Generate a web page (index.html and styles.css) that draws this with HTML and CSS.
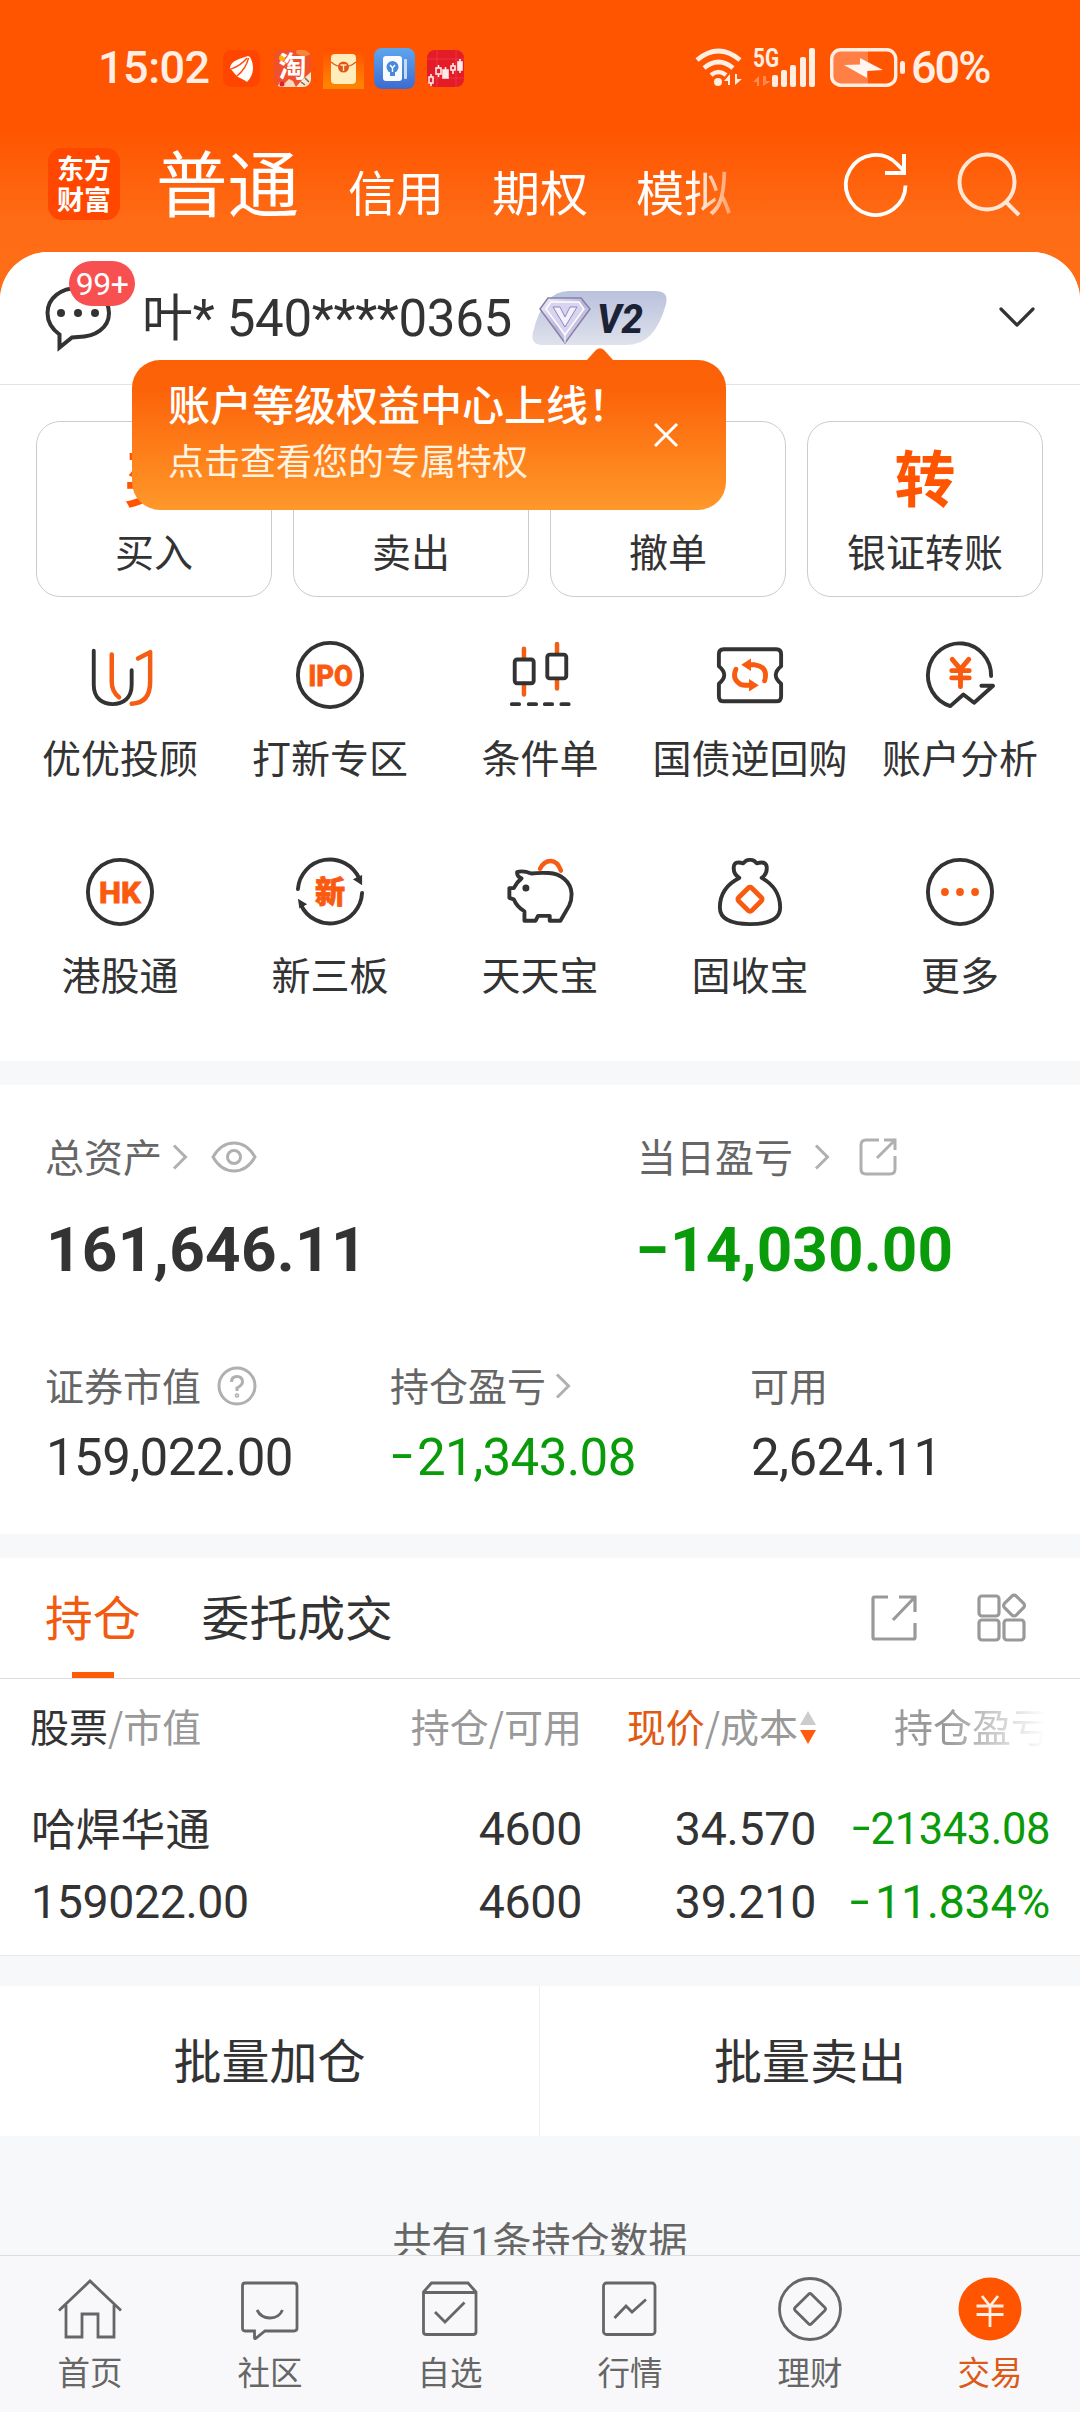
FILE: index.html
```html
<!DOCTYPE html>
<html lang="zh-CN">
<head>
<meta charset="utf-8">
<title>交易</title>
<link rel="stylesheet" href="styles.css">
</head>
<body>
<div class="app">
  <header class="top">
    <div class="status">
      <span class="clock">15:02</span>
      <div class="notices">
        <svg width="37" height="37" viewBox="0 0 37 37"><rect width="37" height="37" rx="8" fill="#ff4500"/><path d="M7 18C8 10 17 9 25 6L27 7C31 14 32 24 24 32L21 30L15 27L12 24Z" fill="#fff"/><path d="M8 19C14 17 20 13 24 8M14 26C20 21 24 15 25.500 8" fill="none" stroke="#ff4500" stroke-width="1.300"/></svg>
        <svg class="n2" width="37" height="37" viewBox="0 0 37 37"><defs><clipPath id="tb"><rect width="37" height="37" rx="8"/></clipPath></defs><g clip-path="url(#tb)"><rect width="37" height="37" fill="#f0502c"/><ellipse cx="30" cy="2" rx="8" ry="4" fill="#f6863c"/><circle cx="8" cy="8" r="3" fill="#ffb400"/><text x="18.500" y="27" font-size="28" font-weight="700" text-anchor="middle" fill="#fff" class="cjk">淘</text><path d="M3 37L6 32L11 33L15 29L19 31L22 37Z" fill="#f8d8c0"/><path d="M22 37L28 30L37 22V37Z" fill="#fbe6cf"/><path d="M27 32L31 35M31 28L35 32" stroke="#7a6a55" stroke-width="1.500"/><circle cx="8" cy="34" r="2.500" fill="#e0202c"/></g></svg>
        <svg class="n3" width="41" height="41" viewBox="0 0 41 41"><defs><linearGradient id="mail" x1="0" y1="0" x2="0" y2="1"><stop offset="0" stop-color="#ff5000"/><stop offset="1" stop-color="#ff8800"/></linearGradient></defs><rect width="41" height="41" fill="url(#mail)"/><rect x="8" y="6" width="25" height="30" rx="4" fill="#ffeebb"/><path d="M8 14Q14 19 20.500 19Q27 19 33 14" fill="none" stroke="#d95a20" stroke-width="1.200"/><circle cx="20.500" cy="19" r="5.500" fill="#e2551a"/><path d="M17.500 17H23.500M20.500 17V23" stroke="#ffe9b0" stroke-width="1.400"/></svg>
        <svg class="n4" width="41" height="41" viewBox="0 0 41 41"><defs><linearGradient id="blue" x1="0" y1="0" x2="0" y2="1"><stop offset="0" stop-color="#5da6ee"/><stop offset="1" stop-color="#3c6bd0"/></linearGradient></defs><rect width="41" height="41" rx="8" fill="url(#blue)"/><rect x="30" y="11" width="3" height="20" rx="1" fill="#c4dcfa"/><rect x="9" y="8" width="19" height="25" rx="3" fill="#f7fbff"/><circle cx="18.500" cy="19" r="6" fill="#4a88da"/><path d="M16 24H21V28H16Z" fill="#4a88da"/><path d="M16 17L18.500 20L21 17M18.500 20V24" stroke="#fff" stroke-width="1.400" fill="none"/></svg>
        <svg class="n5" width="37" height="37" viewBox="0 0 37 37"><rect width="37" height="37" rx="8" fill="#e41c28"/><path d="M0 9H37M0 28H37M10 0V37M29 0V37" stroke="#ee4550" stroke-width=".6"/><g fill="none" stroke="#ffeaea" stroke-width="1.600"><path d="M4 24V27M4 33V36M11.500 15V18M11.500 24V27M18.500 17V20M26 13V16M26 20V24M33 9V12M33 20V23"/><rect x="2" y="27" width="4" height="6"/><rect x="9" y="18" width="5" height="6"/><rect x="16" y="20" width="5" height="8" fill="#ffeaea"/><rect x="24" y="16" width="4" height="4"/><rect x="31" y="12" width="4" height="8" fill="#ffeaea"/></g></svg>
      </div>
      <div class="sys">
        <svg width="48" height="40" viewBox="0 0 48 40"><g fill="none" stroke="#ffeee3" stroke-width="4.600"><path d="M2 12Q23.500 -6 45 12"/><path d="M9 20Q23.500 8 38 20"/><path d="M16 27Q23.500 21 31 27"/></g><circle cx="23" cy="34" r="4" fill="#ffeee3"/><path d="M29 33L35 26V37H33V33ZM40 26V37L47 31H42V26Z" fill="#ffeee3"/></svg>
        <svg class="cell" width="64" height="40" viewBox="0 0 64 40"><text x="0" y="19" font-size="25" font-weight="700" textLength="26" lengthAdjust="spacingAndGlyphs" fill="#ffeee3" class="num">5G</text><path d="M0 34L6 28V38H4V34ZM10 28V38L18 33H13V28Z" fill="#ff8a52"/><g fill="#ffeee3"><rect x="19" y="27" width="6" height="12" rx="2"/><rect x="28" y="22" width="6" height="17" rx="2"/><rect x="37" y="17" width="6" height="22" rx="2"/><rect x="47" y="9" width="6" height="30" rx="2"/><rect x="56" y="0" width="6" height="39" rx="2"/></g></svg>
        <svg class="batt" width="76" height="40" viewBox="0 0 76 40"><path d="M10 2H38V37H10Q2 37 2 28V11Q2 2 10 2Z" fill="#ff7f45"/><rect x="1.700" y="1.700" width="64" height="35.500" rx="9" fill="none" stroke="#ffeee3" stroke-width="3.400"/><path d="M14 17L30 16.500V10L53 22L37 23V30Z" fill="#fff6ef"/><rect x="70" y="13" width="5" height="13" rx="2.500" fill="#ffeee3"/></svg>
        <span class="pct">60%</span>
      </div>
    </div>
    <div class="bar">
      <div class="logo"><span>东方</span><span>财富</span></div>
      <nav class="modes"><span class="on">普通</span><span>信用</span><span>期权</span><span>模拟</span></nav>
      <div class="tools">
        <svg width="64" height="66" viewBox="0 0 64 66"><path d="M61.500 33.500A29.800 30 0 1 1 53 12L59 18" fill="none" stroke="#fff" stroke-width="3.800"/><path d="M60 2V21H41" fill="none" stroke="#fff" stroke-width="4"/></svg>
        <svg width="66" height="66" viewBox="0 0 66 66"><g fill="none" stroke="#ffe6d6" stroke-width="4"><circle cx="30" cy="30" r="27.500"/><path d="M48 49L62 63"/></g></svg>
      </div>
    </div>
  </header>

  <main class="sheet">
    <section class="account">
      <div class="msg">
        <svg width="66" height="66" viewBox="0 0 66 66"><path d="M14.500 48.500C7 43 2.500 36 2.500 27C2.500 12 16 2 33 2S64 12 64 27S50 51 33 51L27 51.500L14.500 61.500Z" fill="none" stroke="#333" stroke-width="4"/><g fill="#333"><circle cx="16" cy="27" r="4"/><circle cx="33" cy="27" r="4"/><circle cx="50" cy="27" r="4"/></g></svg>
        <span class="count">99+</span>
      </div>
      <span class="acct">叶* 540****0365</span>
      <svg class="vip" width="138" height="58" viewBox="0 0 138 58"><defs><linearGradient id="vb" x1="0" y1="0" x2="0" y2="1"><stop offset="0" stop-color="#b9c1dc"/><stop offset="1" stop-color="#dfe2ec"/></linearGradient><linearGradient id="gem" x1="0" y1="0" x2="1" y2="1"><stop offset="0" stop-color="#f5f2ff"/><stop offset=".5" stop-color="#b9b3d8"/><stop offset="1" stop-color="#ebe8f8"/></linearGradient></defs><path d="M38 2H124Q138 2 135 15Q124 56 96 56H12Q-1 56 2 43Q12 2 38 2Z" fill="url(#vb)"/><path d="M17 9H50L59 20L34 54L9 20Z" fill="url(#gem)" stroke="#8580a8" stroke-width="1.500"/><path d="M20 13H48L53 20L34 46L15 20Z" fill="#d8d3ee" stroke="#fff" stroke-width="1.500"/><path d="M22 18L34 38L46 18H39L34 28L29 18Z" fill="#f4f1ff" stroke="#8f87ba"/><path d="M34 46V54" stroke="#fff"/><text x="66" y="44" font-size="41" font-weight="800" font-style="italic" textLength="46" lengthAdjust="spacingAndGlyphs" fill="#1c2236" class="num">V2</text></svg>
      <svg class="down" width="38" height="24" viewBox="0 0 38 24"><path d="M3 3L19 19L35 3" fill="none" stroke="#333" stroke-width="3.200" stroke-linecap="round" stroke-linejoin="round"/></svg>
      <aside class="tip">
        <svg class="tip-arrow" width="28" height="13" viewBox="0 0 28 13"><path d="M0 13L10 2Q14 -1.500 18 2L28 13Z" fill="#fc6108"/></svg>
        <div><div class="tip-title">账户等级权益中心上线！</div><div class="tip-sub">点击查看您的专属特权</div></div>
        <svg width="26" height="26" viewBox="0 0 26 26"><path d="M2 2L24 24M24 2L2 24" stroke="#fff" stroke-width="3"/></svg>
      </aside>
    </section>

    <section class="trade">
      <div class="card"><b>买</b><span>买入</span></div>
      <div class="card"><b>卖</b><span>卖出</span></div>
      <div class="card"><b>撤</b><span>撤单</span></div>
      <div class="card"><b>转</b><span>银证转账</span></div>
    </section>

    <section class="grid">
      <div class="tile"><svg viewBox="0 0 72 72"><path class="d" d="M9 11V46C9 60 18 66 28.500 66S48 60 48 46V31"/><path class="o" d="M27.500 15V43Q27.500 53 35 59M54.500 19L67 12.500V43Q67 65 48 65.500"/></svg><span>优优投顾</span></div>
      <div class="tile"><svg viewBox="0 0 72 72"><circle class="d" cx="36" cy="36" r="33"/><text x="13.500" y="47" font-size="31" textLength="46" lengthAdjust="spacingAndGlyphs" class="t num">IPO</text></svg><span>打新专区</span></div>
      <div class="tile"><svg viewBox="0 0 72 72"><path class="o" stroke-linecap="butt" d="M19.500 9V19M19.500 45V56M53.500 4V14M53.500 40V50"/><rect class="d" x="10" y="20" width="19.500" height="24.500" rx="2.500"/><rect class="d" x="43.500" y="15" width="19.500" height="24.500" rx="2.500"/><path class="d" d="M7 66H14.500M24.500 66H32M41 66H48.500M58 66H65.500"/></svg><span>条件单</span></div>
      <div class="tile"><svg viewBox="0 0 72 72"><path class="d" d="M9 9.500H63Q68 9.500 68 14.500V27Q57 36 68 45V58Q68 63 63 63H9Q4 63 4 58V45Q15 36 4 27V14.500Q4 9.500 9 9.500Z"/><path class="o5" d="M35 25.500H41Q52 27 52 36Q52 39 51 42M21.500 30Q18 38 23 43Q26 46.500 31 46.500H37"/><path class="f" d="M27 25.500L37 19V32ZM45 46.500L35 40V53Z"/></svg><span>国债逆回购</span></div>
      <div class="tile"><svg viewBox="0 0 72 72"><path class="d" stroke-linejoin="miter" d="M68 37A32.500 33 0 1 0 26 68L39.500 56L50.500 64.500L70 47H58"/><path class="o5" d="M28 20L36.500 30L45 20M36.500 30V48M27.500 31.500H45.500M27.500 39H45.500"/></svg><span>账户分析</span></div>
      <div class="tile"><svg viewBox="0 0 72 72"><circle class="d" cx="36" cy="36" r="33"/><text x="14.500" y="47" font-size="31" textLength="43" lengthAdjust="spacingAndGlyphs" class="t num">HK</text></svg><span>港股通</span></div>
      <div class="tile"><svg viewBox="0 0 72 72"><path class="d" d="M3 33A33 33 0 0 1 66 22M69 37A33 33 0 0 1 6 49"/><path d="M59.500 23L69 18.500V29ZM3 43L4.500 53L12.500 48.500Z" fill="#333"/><text x="36" y="47" font-size="31" text-anchor="middle" class="t cjk">新</text></svg><span>新三板</span></div>
      <div class="tile"><svg viewBox="0 0 72 72"><path class="o" d="M36 12Q40 4 47 4T57.500 14"/><path class="d" d="M27 17C22 15 17 14 12.500 15.500Q12 20 17 22Q12 26 9 32H4.500V42L9 43.500Q12 51 20 56V65.500H31.500L34 60.500H46V65.500H57L66 50Q68.500 45 68.500 38C68 25 57 17 45 16.500Q35 16 27 17Z"/><circle cx="21.500" cy="32" r="3.600" fill="#333"/></svg><span>天天宝</span></div>
      <div class="tile"><svg viewBox="0 0 72 72"><path class="d" d="M25 21.500Q18 17 19.500 9Q21 4 29 6.500Q32 2.500 36 3Q40 2.500 43 6.500Q51 4 53 9Q54.500 17 48 21.500C60 28 67 39 67 52C67 64 55 69 36 69S5 64 5 52C5 39 12 28 25 21.500Z"/><rect class="o5" x="26.500" y="34" width="19" height="19" rx="2.500" transform="rotate(45 36 43.500)"/></svg><span>固收宝</span></div>
      <div class="tile"><svg viewBox="0 0 72 72"><circle class="d" cx="36" cy="36" r="33"/><g class="f"><circle cx="20.500" cy="36" r="4"/><circle cx="36" cy="36" r="4"/><circle cx="51.500" cy="36" r="4"/></g></svg><span>更多</span></div>
    </section>

    <section class="assets">
      <div class="main-row">
        <div class="main-item">
          <div class="lbl">总资产<svg class="gt" viewBox="0 0 16 26"><path d="M2 1.500L13.500 13L2 24.500"/></svg><svg class="eye" width="46" height="32" viewBox="0 0 46 32"><path d="M2 16Q10 2 23 2T44 16Q36 30 23 30T2 16Z"/><circle cx="23" cy="16" r="6.500"/></svg></div>
          <div class="big">161,646.11</div>
        </div>
        <div class="main-item">
          <div class="lbl">当日盈亏<svg class="gt far" viewBox="0 0 16 26"><path d="M2 1.500L13.500 13L2 24.500"/></svg><svg class="out" width="38" height="38" viewBox="0 0 38 38"><path d="M20 2H7Q2 2 2 7V31Q2 36 7 36H31Q36 36 36 31V18M18 20L35 3M25 2H36V12"/></svg></div>
          <div class="big loss green"><i>-</i>14,030.00</div>
        </div>
      </div>
      <div class="sub-row">
        <div class="sub-item"><div class="lbl">证券市值<svg class="q" width="40" height="40" viewBox="0 0 40 40"><circle cx="20" cy="20" r="18"/><path d="M14.500 16Q14.500 10.500 20 10.500T25.500 16Q25.500 19 20 22V25"/><circle cx="20" cy="29.500" r=".8"/></svg></div><div class="val">159,022.00</div></div>
        <div class="sub-item"><div class="lbl">持仓盈亏<svg class="gt near" viewBox="0 0 16 26"><path d="M2 1.500L13.500 13L2 24.500"/></svg></div><div class="val green"><i>-</i>21,343.08</div></div>
        <div class="sub-item"><div class="lbl">可用</div><div class="val">2,624.11</div></div>
      </div>
    </section>

    <section class="holdings">
      <div class="tabs">
        <span class="tab on">持仓</span><span class="tab">委托成交</span>
        <div class="tab-tools">
          <svg width="46" height="46" viewBox="0 0 46 46"><path d="M17 2H3.500Q2 2 2 3.500V42.500Q2 44 3.500 44H42.500Q44 44 44 42.500V28M22 25L43 3M28 2H44V17"/></svg>
          <svg width="50" height="48" viewBox="0 0 50 48"><rect x="2" y="2" width="20" height="20" rx="3"/><rect x="2" y="26" width="20" height="20" rx="3"/><rect x="27" y="26" width="20" height="20" rx="3"/><rect x="28.800" y="3.300" width="16.500" height="16.500" rx="3" transform="rotate(45 37 11.600)"/></svg>
        </div>
      </div>
      <div class="table">
        <div class="tr head"><span><em>股票</em>/市值</span><span>持仓/可用</span><span class="sort"><span><em class="hot">现价</em>/成本</span><svg width="16" height="36" viewBox="0 0 16 36"><path d="M8 1L16 15H0Z" fill="#ccc"/><path d="M0 20H16L8 34Z" fill="#ff5a10"/></svg></span><span class="fade">持仓盈亏</span></div>
        <div class="tr r1"><span class="name">哈焊华通</span><span>4600</span><span>34.570</span><span class="pl green"><i>-</i>21343.08</span></div>
        <div class="tr r2"><span class="mv">159022.00</span><span>4600</span><span>39.210</span><span class="green"><i>-</i>11.834%</span></div>
      </div>
    </section>

    <section class="batch"><div>批量加仓</div><div>批量卖出</div></section>
    <p class="total">共有<span class="num">1</span>条持仓数据</p>
  </main>

  <footer class="nav">
    <div class="nv"><svg viewBox="0 0 64 64"><path d="M1 33.500L32 4L63 33.500M8 28V60H24V37H40V60H56V28"/></svg>首页</div>
    <div class="nv"><svg viewBox="0 0 64 64"><path d="M7 6H56Q59 6 59 9V51Q59 54 56 54H27L17.500 61.500Q16.500 62 16.500 60.500V54H7Q4.500 54 4.500 51V9Q4.500 6 7 6ZM19 33Q23 41 32 41T44.500 33"/></svg>社区</div>
    <div class="nv"><svg viewBox="0 0 64 64"><path d="M5.500 15L13.500 6H50L58 15V55Q58 57.500 55 57.500H8.500Q5.500 57.500 5.500 55ZM5.500 15.500H58M17 35L27 45L46.500 25.500"/></svg>自选</div>
    <div class="nv"><svg viewBox="0 0 64 64"><rect x="5.500" y="6" width="51.500" height="51.500" rx="3"/><path d="M16.500 41L28 29L34 35L48 22.500"/></svg>行情</div>
    <div class="nv"><svg viewBox="0 0 64 64"><circle cx="32" cy="32" r="30.500"/><rect x="20.500" y="20.500" width="23" height="23" rx="2" transform="rotate(45 32 32)"/></svg>理财</div>
    <div class="nv on"><svg viewBox="0 0 64 64"><circle cx="32" cy="32" r="31.500" fill="#ff5500" stroke="none"/><path d="M24 19L32 29L40 19M32 28V50M18.500 29H45.500M18.500 37.500H45.500" stroke="#ffeee3"/></svg>交易</div>
  </footer>
</div>
</body>
</html>
```
FILE: styles.css
```css
* { box-sizing: border-box; }
body {
  margin: 0;
  color: #333;
  font-family: "Noto Sans CJK SC", "Noto Sans", sans-serif;
}
svg { display: block; flex: none; overflow: visible; }
.num { font-family: Roboto, sans-serif; }
.cjk { font-family: "Noto Sans CJK SC", sans-serif; }
em, i { font-style: normal; }
.green { color: #0a9b0a; }

.app {
  width: 1080px;
  height: 2412px;
  overflow: hidden;
  display: flex;
  flex-direction: column;
  background: #f7f8fa;
}

/* header */
.top {
  height: 304px;
  margin-bottom: -52px;
  flex: none;
  background: linear-gradient(#ff5500 0, #ff5500 130px, #ff6c16 225px, #ff6e18 304px);
}
.status {
  height: 136px;
  padding: 0 90px 0 98px;
  display: flex;
  align-items: center;
  color: #ffeee3;
  font: 500 45px/136px Roboto, sans-serif;
}
.clock { width: 125px; letter-spacing: -.5px; }
.notices { display: flex; align-items: center; }
.n2 { margin-left: 14px; }
.n3 { margin-left: 12px; }
.n4 { margin-left: 10px; }
.n5 { margin-left: 12px; }
.sys { margin-left: auto; display: flex; align-items: center; }
.cell { margin-left: 10px; }
.batt { margin: 0 5px 0 13px; }
.pct { width: 79px; white-space: nowrap; letter-spacing: -2px; }

.bar { height: 116px; padding: 0 57px 0 48px; display: flex; align-items: flex-start; }
.logo {
  width: 72px;
  height: 72px;
  margin-top: 12px;
  padding-top: 4px;
  border-radius: 14px;
  background: #ff4700;
  color: #fff;
  font-size: 27px;
  font-weight: 700;
  line-height: 31px;
  display: flex;
  flex-direction: column;
  align-items: center;
}
.modes {
  height: 116px;
  margin-left: 36px;
  width: 584px;
  display: flex;
  align-items: baseline;
  gap: 48px;
  color: #fff;
  font-size: 48px;
  line-height: 88px;
  white-space: nowrap;
  -webkit-mask-image: linear-gradient(90deg, #000 535px, transparent 600px);
  mask-image: linear-gradient(90deg, #000 535px, transparent 600px);
}
.modes .on { width: 144px; font-size: 71.500px; }
.tools { margin: 16px 0 0 auto; display: flex; gap: 49px; }

/* account line */
.sheet {
  height: 2003px;
  flex: none;
  overflow: hidden;
  border-radius: 48px 48px 0 0;
  position: relative;
  background: #f7f8fa;
}
.account {
  height: 133px;
  padding: 0 44px 0 45px;
  border-bottom: 1.500px solid #e2e2e2;
  position: relative;
  display: flex;
  align-items: center;
  background: #fff;
}
.msg { position: relative; width: 97px; padding-top: 2px; }
.count {
  position: absolute;
  left: 24px;
  top: -23px;
  width: 66px;
  height: 45px;
  border-radius: 23px;
  background: #f85050;
  color: #fff;
  font: 400 32px/46px Roboto, sans-serif;
  letter-spacing: -.5px;
  text-align: center;
}
.acct { width: 389px; padding-top: 2px; font: 400 51px/80px Roboto, "Noto Sans CJK SC", sans-serif; letter-spacing: -.3px; white-space: nowrap; }
.down { margin-left: auto; }
.tip {
  position: absolute;
  z-index: 2;
  left: 132px;
  top: 108px;
  width: 594px;
  height: 150px;
  padding: 0 47px 0 36px;
  border-radius: 28px;
  background: linear-gradient(#fc6108 0, #fc6309 20%, #ff982a 100%);
  color: #fff;
  display: flex;
  align-items: center;
  justify-content: space-between;
}
.tip-arrow { position: absolute; left: 454px; top: -12px; }
.tip-title { font-size: 42px; font-weight: 500; line-height: 56px; margin-top: -9px; white-space: nowrap; }
.tip-sub { font-size: 36px; line-height: 56px; color: #fff3e2; }

/* trade buttons */
.trade {
  padding: 36px 36px 18px;
  display: flex;
  gap: 21px;
  background: #fff;
}
.card {
  width: 236px;
  height: 176px;
  border: 1.500px solid #ccc;
  border-radius: 24px;
  display: flex;
  flex-direction: column;
  align-items: center;
  font-size: 39px;
}
.card b { height: 88px; padding-top: 10px; font-size: 61px; line-height: 88px; color: #ff5500; }
.card span { margin-top: 12px; line-height: 56px; }

.grid {
  height: 446px;
  padding: 24px 15px 0;
  display: grid;
  grid-template-columns: repeat(5, 210px);
  grid-auto-rows: 217px;
  background: #fff;
}
.tile { display: flex; flex-direction: column; align-items: center; font-size: 39px; line-height: 56px; white-space: nowrap; }
.tile svg { width: 70px; height: 70px; margin: 1px 0 18px; }
.d, .o, .o5 { fill: none; stroke: #333; stroke-width: 4; stroke-linejoin: round; stroke-linecap: round; }
.o { stroke: #f55d14; stroke-width: 4.6; }
.o5 { stroke: #f85a10; stroke-width: 5; }
.f { fill: #fa5a10; }
.t { fill: #fa5a10; font-weight: 800; stroke: #fa5a10; stroke-width: .8; }

/* assets */
.assets { height: 449px; margin-top: 24px; padding: 0 45px; background: #fff; }
.main-row, .sub-row { display: flex; }
.main-row { height: 252px; padding-top: 42px; }
.main-item { width: 592px; flex: none; }
.lbl { display: flex; align-items: center; height: 56px; font-size: 39px; line-height: 56px; color: #666; white-space: nowrap; }
.lbl svg { margin-top: 4px; fill: none; stroke: #b0b0b0; stroke-width: 3; }
.gt { width: 16px; height: 26px; margin-left: 10px; }
.gt.far { margin-left: 21px; }
.gt.near { margin-left: 9px; }
.eye { margin-left: 23px; }
.out { margin-left: 29px; }
.q { margin-left: 16px; }
.big { height: 80px; margin-top: 27px; padding-left: 1px; font: 700 62px/80px Roboto, sans-serif; letter-spacing: .3px; }
.loss { letter-spacing: .1px; }
.big i, .val i, .tr i { display: inline-block; transform: translateY(-.05em) scaleX(1.5); }
.big i { width: 32px; padding-left: 3px; }
.sub-row { padding-top: 19px; }
.sub-item:nth-child(1) { width: 345px; }
.sub-item:nth-child(2) { width: 360px; }
.val { height: 64px; margin-top: 14px; padding-left: 1px; font: 400 51px/64px Roboto, sans-serif; letter-spacing: -.6px; }
.val.green { padding-left: 3px; }
.val i { width: 24px; padding-left: 3px; }

/* holdings */
.holdings { height: 398px; margin-top: 24px; background: #fff; border-bottom: 1.500px solid #eaeaea; }
.tabs {
  height: 121px;
  padding: 0 53px 0 45px;
  display: flex;
  gap: 61px;
  border-bottom: 1.500px solid #ddd;
  font-size: 48px;
  line-height: 115px;
}
.tab.on {
  color: #f25a10;
  background: linear-gradient(#ff5a05, #ff5a05) center 114px / 42px 6px no-repeat;
}
.tab { font-size: 47.800px; }
.tab-tools { margin-left: auto; display: flex; align-items: center; gap: 60px; }
.tab-tools svg { fill: none; stroke: #999; stroke-width: 3.2; }
.table { padding: 0 30px; }
.tr {
  display: grid;
  grid-template-columns: 300px 252px 234px 234px;
  text-align: right;
  font: 400 46.500px/72px Roboto, sans-serif;
  letter-spacing: -.3px;
  white-space: nowrap;
}
.tr > :first-child { text-align: left; }
.tr i { width: 20px; text-align: left; }
.head { height: 96px; font: 400 39px/92px "Noto Sans CJK SC", sans-serif; letter-spacing: 0; color: #999; }
.head em { color: #333; }
.head .hot { color: #e05a14; }
.sort { height: 92px; display: flex; align-items: center; justify-content: flex-end; gap: 2px; }
.sort svg { margin-top: 6px; }
.fade {
  -webkit-mask-image: linear-gradient(90deg, #000 55%, transparent 98%);
  mask-image: linear-gradient(90deg, #000 55%, transparent 98%);
}
.r1 { height: 73px; margin-top: 18px; }
.name { padding-left: 1px; font: 400 44.800px/68px "Noto Sans CJK SC", sans-serif; letter-spacing: 0; }
.tr .pl { padding-top: 1px; font-size: 43.500px; letter-spacing: -.4px; }
.pl i { width: 15px; }
.mv { padding-left: 1px; letter-spacing: -.4px; }

.batch { height: 150px; margin-top: 30px; display: flex; background: #fff; }
.batch div { width: 539px; text-align: center; font-size: 48px; line-height: 144px; }
.batch div + div { width: 541px; border-left: 1px solid #eee; }
.total { margin: 74px 0 0; text-align: center; font-size: 39px; line-height: 56px; color: #666; }

/* bottom navigation */
.nav {
  height: 157px;
  flex: none;
  display: grid;
  grid-template-columns: repeat(6, 180px);
  border-top: 1.500px solid #ddd;
  background: #f8f8fa;
  position: relative;
}
.nv { padding-top: 21px; display: flex; flex-direction: column; align-items: center; font-size: 32.500px; line-height: 44px; color: #666; }
.nv svg { width: 64px; height: 64px; margin-bottom: 8px; fill: none; stroke: #666; stroke-width: 2.800; }
.nv.on { color: #dc5a18; }
```
